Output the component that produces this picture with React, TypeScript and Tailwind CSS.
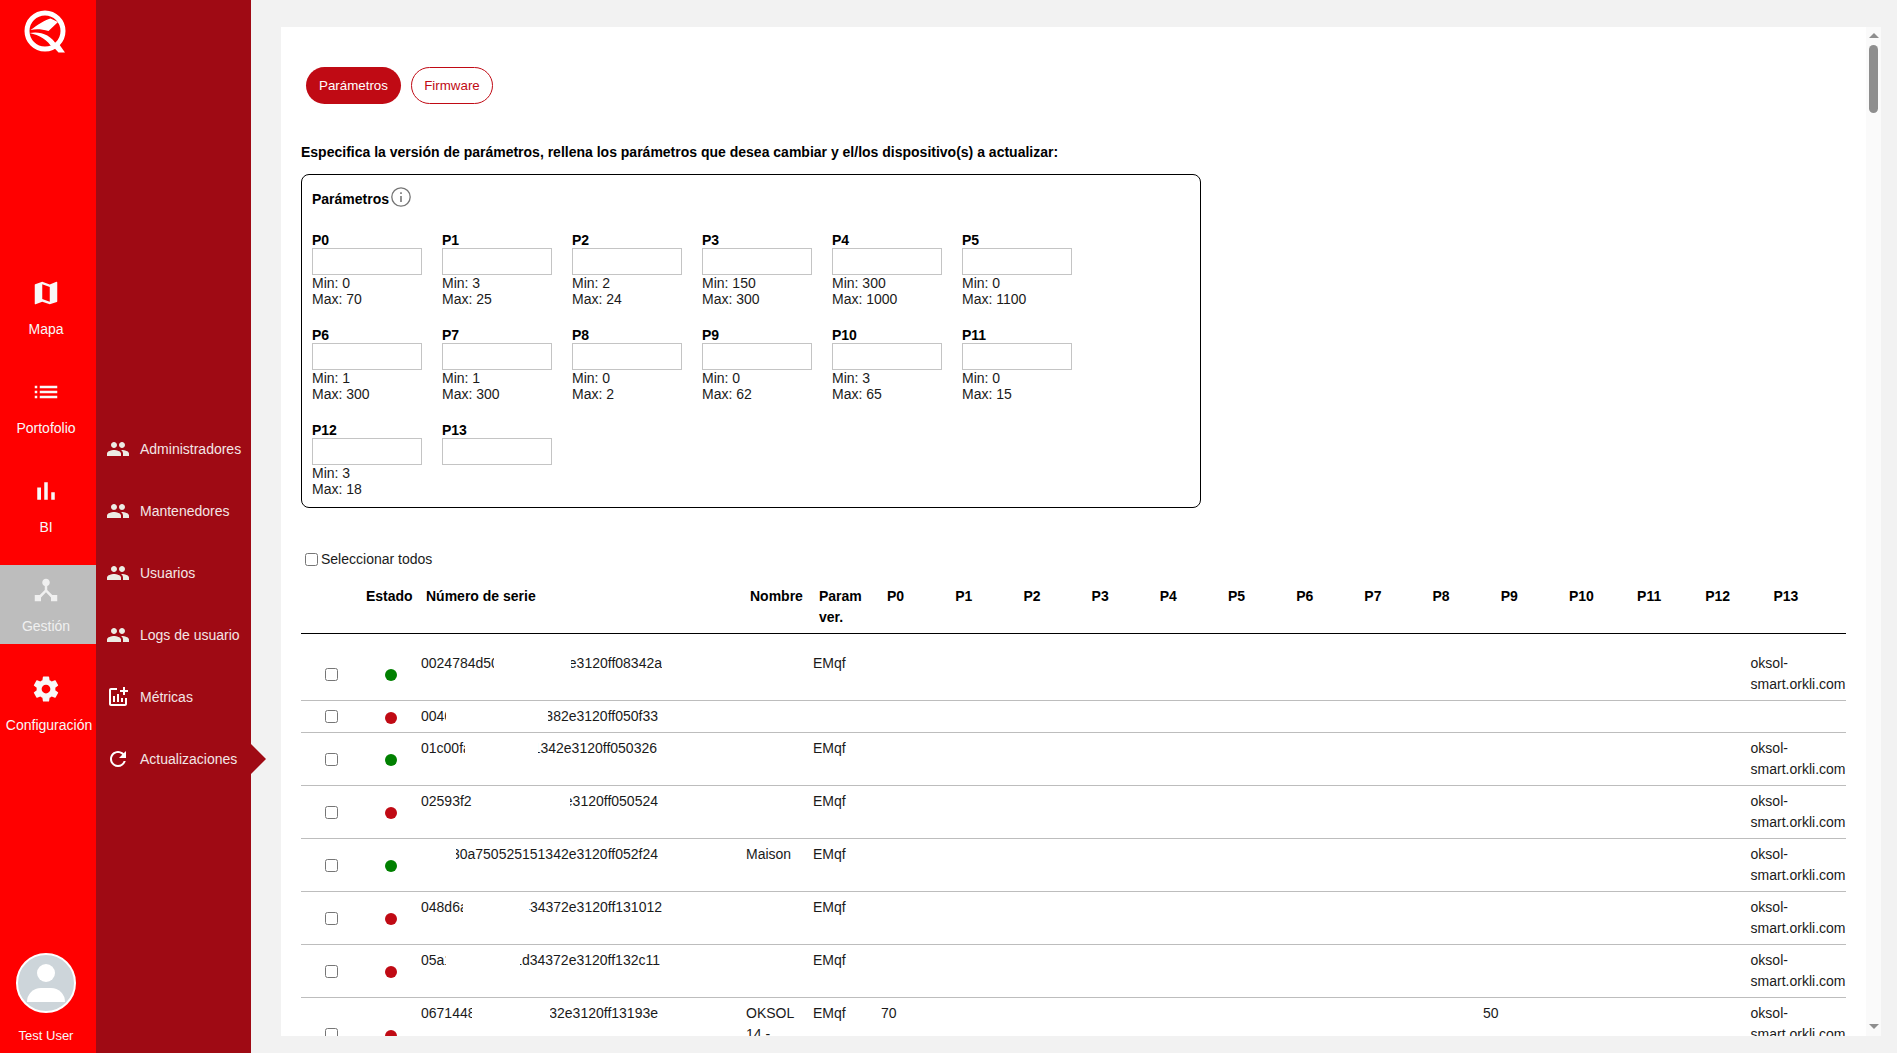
import React from "react";

const paths = {
  map: "M20.5 3l-.16.03L15 5.1 9 3 3.36 4.9c-.21.07-.36.25-.36.48V20.5c0 .28.22.5.5.5l.16-.03L9 18.9l6 2.1 5.64-1.9c.21-.07.36-.25.36-.48V3.5c0-.28-.22-.5-.5-.5zM15 19l-6-2.11V5l6 2.11V19z",
  list: "M3 13h2v-2H3v2zm0 4h2v-2H3v2zm0-8h2V7H3v2zm4 4h14v-2H7v2zm0 4h14v-2H7v2zM7 7v2h14V7H7z",
  bars: "M5 9.2h3V19H5zM10.6 5h2.8v14h-2.8zm5.6 8H19v6h-2.8z",
  hub: "M17 16l-4-4V8.82C14.16 8.4 15 7.3 15 6c0-1.66-1.34-3-3-3S9 4.34 9 6c0 1.3.84 2.4 2 2.82V12l-4 4H3v5h5v-3.05l4-4.2 4 4.2V21h5v-5h-4z",
  gear: "M19.43 12.98c.04-.32.07-.64.07-.98s-.03-.66-.07-.98l2.11-1.65c.19-.15.24-.42.12-.64l-2-3.46c-.12-.22-.39-.3-.61-.22l-2.49 1c-.52-.4-1.08-.73-1.69-.98l-.38-2.65C14.46 2.18 14.25 2 14 2h-4c-.25 0-.46.18-.49.42l-.38 2.65c-.61.25-1.17.59-1.69.98l-2.49-1c-.23-.09-.49 0-.61.22l-2 3.46c-.13.22-.07.49.12.64l2.11 1.65c-.04.32-.07.65-.07.98s.03.66.07.98l-2.11 1.65c-.19.15-.24.42-.12.64l2 3.46c.12.22.39.3.61.22l2.49-1c.52.4 1.08.73 1.69.98l.38 2.65c.03.24.24.42.49.42h4c.25 0 .46-.18.49-.42l.38-2.65c.61-.25 1.17-.59 1.69-.98l2.49 1c.23.09.49 0 .61-.22l2-3.46c.12-.22.07-.49-.12-.64l-2.11-1.65zM12 15.5c-1.93 0-3.5-1.57-3.5-3.5s1.57-3.5 3.5-3.5 3.5 1.57 3.5 3.5-1.57 3.5-3.5 3.5z",
  people: "M16 11c1.66 0 2.99-1.34 2.99-3S17.66 5 16 5c-1.66 0-3 1.34-3 3s1.34 3 3 3zm-8 0c1.66 0 2.99-1.34 2.99-3S9.66 5 8 5C6.34 5 5 6.34 5 8s1.34 3 3 3zm0 2c-2.33 0-7 1.17-7 3.5V19h14v-2.5c0-2.33-4.67-3.5-7-3.5zm8 0c-.29 0-.62.02-.97.05 1.16.84 1.97 1.97 1.97 3.45V19h6v-2.5c0-2.33-4.67-3.5-7-3.5z",
  addchart: "M22 5v2h-3v3h-2V7h-3V5h3V2h2v3h3zm-3 14H5V5h6V3H5c-1.1 0-2 .9-2 2v14c0 1.1.9 2 2 2h14c1.1 0 2-.9 2-2v-6h-2v6zm-4-6v4h2v-4h-2zm-4 4h2V9h-2v8zm-2 0v-6H7v6h2z",
  refresh: "M17.65 6.35C16.2 4.9 14.21 4 12 4c-4.42 0-7.99 3.58-7.99 8s3.57 8 7.99 8c3.73 0 6.84-2.55 7.73-6h-2.08c-.82 2.33-3.04 4-5.65 4-3.31 0-6-2.69-6-6s2.69-6 6-6c1.66 0 3.14.69 4.22 1.78L13 11h7V4l-2.35 2.35z",
};

const Icon = ({ d, className }: { d: string; className: string }) => (
  <svg viewBox="0 0 24 24" fill="currentColor" className={className}>
    <path d={d} />
  </svg>
);

const Logo = () => (
  <svg viewBox="0 0 52 52" className="w-[52px] h-[52px]" fill="white">
    <circle cx="25.5" cy="26" r="18" fill="none" stroke="white" strokeWidth="5" />
    <path d="M38 37 L45.5 47.5 L39 47.5 L33 41 Z" />
    <path d="M11 25 C18 20 25 15 31 13.5 L38.5 17 L29 26 C22 24 16 24 11 25 Z" />
    <path d="M10 28 C20 26 31 29 38 41 L33 43 C28 35 20 30 10 28 Z" />
  </svg>
);

const railItems = [
  { label: "Mapa", icon: paths.map },
  { label: "Portofolio", icon: paths.list },
  { label: "BI", icon: paths.bars },
  { label: "Gestión", icon: paths.hub, active: true },
  { label: "Configuración", icon: paths.gear, shift: true },
];

const subItems = [
  { label: "Administradores", icon: paths.people },
  { label: "Mantenedores", icon: paths.people },
  { label: "Usuarios", icon: paths.people },
  { label: "Logs de usuario", icon: paths.people },
  { label: "Métricas", icon: paths.addchart, white: true },
  { label: "Actualizaciones", icon: paths.refresh, white: true, current: true },
];

const params = [
  { name: "P0", min: 0, max: 70 },
  { name: "P1", min: 3, max: 25 },
  { name: "P2", min: 2, max: 24 },
  { name: "P3", min: 150, max: 300 },
  { name: "P4", min: 300, max: 1000 },
  { name: "P5", min: 0, max: 1100 },
  { name: "P6", min: 1, max: 300 },
  { name: "P7", min: 1, max: 300 },
  { name: "P8", min: 0, max: 2 },
  { name: "P9", min: 0, max: 62 },
  { name: "P10", min: 3, max: 65 },
  { name: "P11", min: 0, max: 15 },
  { name: "P12", min: 3, max: 18 },
  { name: "P13" },
];

const host = "oksol-smart.orkli.com";

// serial numbers are blanked in the middle, hence the two clipped pieces
const devices = [
  { on: true, left: "0024784d50", leftW: 73, gap: 77, right: "0e3120ff08342a", rightW: 91, param: "EMqf", host },
  { on: false, left: "0046", leftW: 25, gap: 102, right: "382e3120ff050f33", rightW: 110 },
  { on: true, left: "01c00fa", leftW: 44, gap: 73, right: "1342e3120ff050326", rightW: 119, param: "EMqf", host },
  { on: false, left: "02593f2", leftW: 51, gap: 98, right: "2e3120ff050524", rightW: 88, param: "EMqf", host },
  { on: true, left: "", leftW: 0, gap: 35, right: "30a750525151342e3120ff052f24", rightW: 202, name: "Maison", param: "EMqf", host },
  { on: false, left: "048d6a", leftW: 42, gap: 66, right: "434372e3120ff131012", rightW: 133, param: "EMqf", host },
  { on: false, left: "05a1", leftW: 25, gap: 74, right: "1d34372e3120ff132c11", rightW: 140, param: "EMqf", host },
  { on: false, left: "0671448", leftW: 51, gap: 78, right: "32e3120ff13193e", rightW: 108, name: "OKSOL 14 - Oficina", param: "EMqf", p0: "70", p9: "50", host },
];

const App = () => {
  return (
    <div className="flex h-screen overflow-hidden bg-[#f2f2f2] font-['Liberation_Sans',sans-serif] text-sm text-[#1a1a1a]">
      {/* Main rail */}
      <aside className="flex h-full w-24 shrink-0 flex-col items-center bg-[#ff0000] text-[#f8f8f8]">
        <div className="mt-[5px] h-[52px] w-[52px] -translate-x-[2.5px]">
          <Logo />
        </div>
        <nav className="mt-[211px] flex w-full flex-col gap-5">
          {railItems.map((item) => (
            <div
              key={item.label}
              className={`flex h-[79px] w-full flex-col items-center pr-1 pt-[10px] ${item.active ? "bg-[#bdbdbd] text-[#f0f0f0]" : ""}`}
            >
              <Icon d={item.icon} className="h-[30px] w-[30px]" />
              <span className={`mt-[13px] whitespace-nowrap leading-4 ${item.shift ? "ml-[6px]" : ""}`}>{item.label}</span>
            </div>
          ))}
        </nav>
        <div className="mt-auto flex flex-col items-center pb-[9px] pr-1">
          <div className="relative h-[60px] w-[60px] overflow-hidden rounded-full border-2 border-white bg-[#cdd5da]">
            <div className="absolute left-[19px] top-[9px] h-[18px] w-[18px] rounded-full bg-white" />
            <div className="absolute left-[9px] top-[33px] h-[14px] w-[38px] rounded-t-[19px] bg-white" />
          </div>
          <span className="mt-[15px] text-[13px] leading-4">Test User</span>
        </div>
      </aside>

      {/* Section menu */}
      <nav className="relative h-full w-[155px] shrink-0 bg-[#9f0a14] pl-[10px] pt-[437px] text-[#f3e6e6]">
        <div className="flex flex-col gap-[38px]">
          {subItems.map((item) => (
            <div key={item.label} className="relative flex h-6 items-center gap-[10px]">
              <Icon d={item.icon} className={`h-6 w-6 shrink-0 ${item.white ? "text-white" : "text-[#ecece4]"}`} />
              <span className="whitespace-nowrap">{item.label}</span>
              {item.current && (
                <div className="absolute left-[145px] top-[-3px] h-0 w-0 border-y-[15px] border-l-[15px] border-y-transparent border-l-[#9f0a14]" />
              )}
            </div>
          ))}
        </div>
      </nav>

      {/* Content */}
      <main className="flex h-full min-w-0 flex-1 pb-[17px] pl-[30px] pr-4 pt-[27px]">
        <div className="flex h-full w-full overflow-hidden bg-white">
          <div className="min-w-0 flex-1 overflow-hidden px-5 pt-10">
            <div className="ml-[5px] flex gap-[10px]">
              <button className="h-[37px] w-[95px] rounded-full bg-[#c00a14] text-[13.33px] text-white">Parámetros</button>
              <button className="h-[37px] w-[82px] rounded-full border border-[#c00a14] bg-white text-[13.33px] text-[#c00a14]">Firmware</button>
            </div>

            <p className="mt-[38px] font-bold leading-[21px] text-black">
              Especifica la versión de parámetros, rellena los parámetros que desea cambiar y el/los dispositivo(s) a actualizar:
            </p>

            <section className="mt-[11px] h-[334px] w-[900px] rounded-lg border border-black px-[10px] pt-3">
              <div className="flex items-start gap-[2px]">
                <span className="mt-1 font-bold leading-4 text-black">Parámetros</span>
                <svg viewBox="0 0 20 20" className="h-5 w-5 text-[#757575]" fill="none" stroke="currentColor">
                  <circle cx="10" cy="10" r="9.2" strokeWidth="1.3" />
                  <path d="M10 9v6" strokeWidth="1.6" />
                  <path d="M10 5.2v1.8" strokeWidth="1.6" />
                </svg>
              </div>
              <div className="mt-[25px] grid grid-cols-[repeat(6,130px)] gap-y-5 leading-4">
                {params.map((p) => (
                  <div key={p.name} className="h-[75px]">
                    <div className="font-bold text-black">{p.name}</div>
                    <input className="block h-[27px] w-[110px] border border-[#c4c4c4] bg-white" />
                    {p.max !== undefined && (
                      <>
                        <div>Min: {p.min}</div>
                        <div>Max: {p.max}</div>
                      </>
                    )}
                  </div>
                ))}
              </div>
            </section>

            <label className="mt-[41px] ml-1 flex items-center gap-[3px] leading-[21px]">
              <input type="checkbox" className="h-[13px] w-[13px]" />
              Seleccionar todos
            </label>

            {/* Table head */}
            <div className="mt-4 grid grid-cols-[65px_60px_324px_69px_68px_repeat(13,68.2px)_1fr] border-b border-black pb-[5px] font-bold leading-[21px] text-black">
              <div />
              <div>Estado</div>
              <div>Número de serie</div>
              <div>Nombre</div>
              <div>Param ver.</div>
              {params.map((p) => (
                <div key={p.name}>{p.name}</div>
              ))}
            </div>

            {/* Table rows */}
            {devices.map((d, i) => (
              <div
                key={d.right}
                className={`grid grid-cols-[60px_60px_325px_67px_68px_repeat(13,66.9px)_95px] border-b border-[#bdbdbd] pb-[5px] leading-[21px] ${i === 0 ? "pt-[19px]" : "pt-[5px]"}`}
              >
                <div className="flex items-center justify-center self-center">
                  <input type="checkbox" className="h-[13px] w-[13px]" />
                </div>
                <div className="flex translate-y-px items-center justify-center self-center">
                  <span className={`h-3 w-3 rounded-full ${d.on ? "bg-[#008000]" : "bg-[#c00a14]"}`} />
                </div>
                <div className="flex whitespace-nowrap">
                  <span className="overflow-hidden" style={{ width: d.leftW }}>{d.left}</span>
                  <span className="flex justify-end overflow-hidden" style={{ marginLeft: d.gap, width: d.rightW }}>
                    <span className="shrink-0">{d.right}</span>
                  </span>
                </div>
                <div>{d.name}</div>
                <div>{d.param}</div>
                <div>{d.p0}</div>
                <div className="col-start-15">{d.p9}</div>
                <div className="col-start-19">{d.host}</div>
              </div>
            ))}
          </div>

          {/* Scrollbar */}
          <div className="flex w-[15px] shrink-0 flex-col items-center bg-[#fafafa] pt-[6px]">
            <div className="h-0 w-0 border-x-[5px] border-b-[5px] border-x-transparent border-b-[#8e8e8e]" />
            <div className="mt-[7px] h-[68px] w-[9px] rounded-full bg-[#8e8e8e]" />
            <div className="mb-[7px] mt-auto h-0 w-0 border-x-[5px] border-t-[5px] border-x-transparent border-t-[#8e8e8e]" />
          </div>
        </div>
      </main>
    </div>
  );
};

export default App;
